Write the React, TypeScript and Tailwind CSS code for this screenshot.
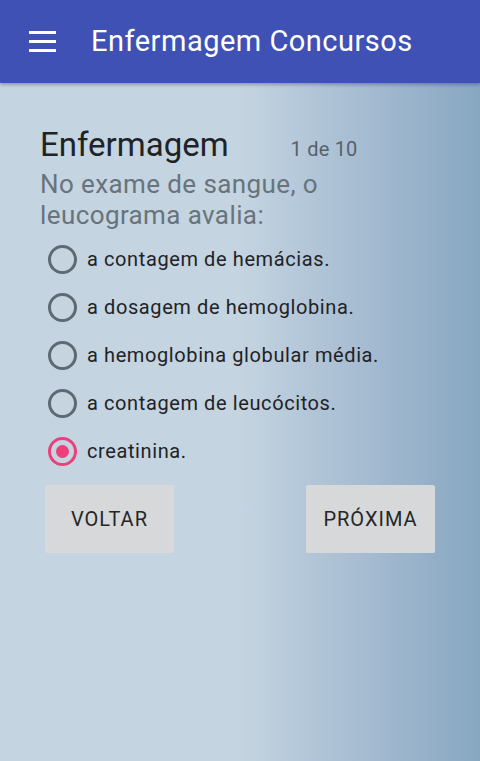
const options = [
  'a contagem de hemácias.',
  'a dosagem de hemoglobina.',
  'a hemoglobina globular média.',
  'a contagem de leucócitos.',
  'creatinina.',
];

const Radio = ({ checked }: { checked: boolean }) => (
  <span
    className={`flex h-[29px] w-[29px] shrink-0 items-center justify-center rounded-full border-[3px] ${
      checked ? 'border-[#ec407a]' : 'border-[#5f6971]'
    }`}
  >
    {checked && <span className="h-[13px] w-[13px] rounded-full bg-[#ec407a]" />}
  </span>
);

const App = () => {
  const selected = 4;
  return (
    <div className="flex h-[761px] w-[480px] flex-col font-['Roboto',sans-serif]">
      <header className="z-10 flex h-[83px] shrink-0 items-center bg-[#3f51b5] shadow-[0_2px_3px_rgba(0,0,0,0.25)]">
        <div className="ml-[29px] flex w-[27px] flex-col gap-[6px]">
          <span className="h-[3px] bg-white" />
          <span className="h-[3px] bg-white" />
          <span className="h-[3px] bg-white" />
        </div>
        <h1 className="ml-[35px] text-[29px] tracking-[0.5px] text-white">Enfermagem Concursos</h1>
      </header>

      <main className="flex-1 bg-[linear-gradient(to_right,#c4d4e1_0%,#c4d4e1_50%,#a9bed3_73%,#87a7c1_100%)] px-[40px] pt-[42px]">
        <div className="flex items-baseline">
          <h2 className="text-[33px] leading-[40px] text-[#1f2326]">Enfermagem</h2>
          <span className="ml-[62px] text-[20px] tracking-[0.2px] text-[#56616b]">1 de 10</span>
        </div>
        <p className="mt-[4px] text-[26px] leading-[31px] tracking-[0.4px] text-[#69737c]">
          No exame de sangue, o<br />leucograma avalia:
        </p>

        <ul className="mt-[4px] flex flex-col">
          {options.map((o, i) => (
            <li key={o} className="flex h-[48px] items-center gap-[10px] pl-[8px]">
              <Radio checked={i === selected} />
              <span className="text-[20px] tracking-[0.6px] text-[#1f2326]">{o}</span>
            </li>
          ))}
        </ul>

        <div className="mt-[10px] flex justify-between px-[5px]">
          <button className="h-[68px] w-[129px] rounded-[2px] bg-[#d6d8d9] text-[20px] tracking-[1px] text-[#262626]">
            VOLTAR
          </button>
          <button className="h-[68px] w-[129px] rounded-[2px] bg-[#d6d8d9] text-[20px] tracking-[1px] text-[#262626]">
            PRÓXIMA
          </button>
        </div>
      </main>
    </div>
  );
};

export default App;
